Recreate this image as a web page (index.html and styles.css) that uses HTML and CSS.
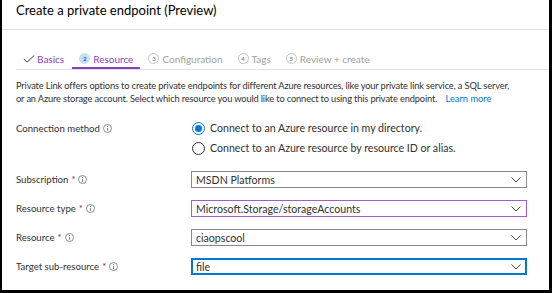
FILE: index.html
```html
<!DOCTYPE html>
<html>
<head>
<meta charset="utf-8">
<link rel="stylesheet" href="styles.css">
</head>
<body>
<div class="frame">
  <header class="title-bar">
    <h1 class="title">Create a private endpoint (Preview)</h1>
  </header>
  <div class="content">
    <nav class="tabs">
      <div class="tab done">
        <svg class="check" width="13" height="9" viewBox="0 0 13 9"><polyline points="0.7,4.4 4.3,8 12.3,0.6" fill="none" stroke="#323130" stroke-width="1.1"/></svg>
        <span>Basics</span>
      </div>
      <div class="tab active">
        <span class="step">2</span>
        <span>Resource</span>
      </div>
      <div class="tab">
        <span class="step">3</span>
        <span>Configuration</span>
      </div>
      <div class="tab">
        <span class="step">4</span>
        <span>Tags</span>
      </div>
      <div class="tab">
        <span class="step">5</span>
        <span>Review + create</span>
      </div>
    </nav>
    <p class="desc">Private Link offers options to create private endpoints for different Azure resources, like your private link service, a SQL server, or an Azure storage account. Select which resource you would like to connect to using this private endpoint. <a class="link">Learn more</a></p>

    <div class="form">
      <div class="row radio-row">
        <div class="label">Connection method <svg class="info" width="9" height="9" viewBox="0 0 9 9"><circle cx="4.5" cy="4.5" r="4" fill="none" stroke="#605e5c" stroke-width="0.7"/><line x1="4.5" y1="3.8" x2="4.5" y2="6.8" stroke="#605e5c" stroke-width="0.8"/><circle cx="4.5" cy="2.5" r="0.5" fill="#605e5c"/></svg></div>
        <div class="radios">
          <div class="radio-opt"><span class="radio checked"></span><span>Connect to an Azure resource in my directory.</span></div>
          <div class="radio-opt"><span class="radio"></span><span>Connect to an Azure resource by resource ID or alias.</span></div>
        </div>
      </div>
      <div class="row">
        <div class="label">Subscription <span class="req">*</span> <svg class="info" width="9" height="9" viewBox="0 0 9 9"><circle cx="4.5" cy="4.5" r="4" fill="none" stroke="#605e5c" stroke-width="0.7"/><line x1="4.5" y1="3.8" x2="4.5" y2="6.8" stroke="#605e5c" stroke-width="0.8"/><circle cx="4.5" cy="2.5" r="0.5" fill="#605e5c"/></svg></div>
        <div class="select"><span>MSDN Platforms</span><svg class="chev" width="10" height="6" viewBox="0 0 10 6"><polyline points="0.5,0.5 5,5 9.5,0.5" fill="none" stroke="#323130" stroke-width="0.9"/></svg></div>
      </div>
      <div class="row">
        <div class="label">Resource type <span class="req">*</span> <svg class="info" width="9" height="9" viewBox="0 0 9 9"><circle cx="4.5" cy="4.5" r="4" fill="none" stroke="#605e5c" stroke-width="0.7"/><line x1="4.5" y1="3.8" x2="4.5" y2="6.8" stroke="#605e5c" stroke-width="0.8"/><circle cx="4.5" cy="2.5" r="0.5" fill="#605e5c"/></svg></div>
        <div class="select purple"><span>Microsoft.Storage/storageAccounts</span><svg class="chev" width="10" height="6" viewBox="0 0 10 6"><polyline points="0.5,0.5 5,5 9.5,0.5" fill="none" stroke="#323130" stroke-width="0.9"/></svg></div>
      </div>
      <div class="row">
        <div class="label">Resource <span class="req">*</span> <svg class="info" width="9" height="9" viewBox="0 0 9 9"><circle cx="4.5" cy="4.5" r="4" fill="none" stroke="#605e5c" stroke-width="0.7"/><line x1="4.5" y1="3.8" x2="4.5" y2="6.8" stroke="#605e5c" stroke-width="0.8"/><circle cx="4.5" cy="2.5" r="0.5" fill="#605e5c"/></svg></div>
        <div class="select"><span>ciaopscool</span><svg class="chev" width="10" height="6" viewBox="0 0 10 6"><polyline points="0.5,0.5 5,5 9.5,0.5" fill="none" stroke="#323130" stroke-width="0.9"/></svg></div>
      </div>
      <div class="row">
        <div class="label">Target sub-resource <span class="req">*</span> <svg class="info" width="9" height="9" viewBox="0 0 9 9"><circle cx="4.5" cy="4.5" r="4" fill="none" stroke="#605e5c" stroke-width="0.7"/><line x1="4.5" y1="3.8" x2="4.5" y2="6.8" stroke="#605e5c" stroke-width="0.8"/><circle cx="4.5" cy="2.5" r="0.5" fill="#605e5c"/></svg></div>
        <div class="select blue"><span>file</span><svg class="chev" width="10" height="6" viewBox="0 0 10 6"><polyline points="0.5,0.5 5,5 9.5,0.5" fill="none" stroke="#323130" stroke-width="0.9"/></svg></div>
      </div>
    </div>
  </div>
</div>
</body>
</html>
```

FILE: styles.css
```css
html, body {
  margin: 0;
  padding: 0;
  background: #fff;
}
body {
  font-family: "Lato", "Open Sans", sans-serif;
  color: #323130;
}
.frame {
  width: 552px;
  height: 293px;
  box-sizing: border-box;
  border-left: 2px solid #000;
  border-right: 3px solid #000;
  border-bottom: 3px solid #000;
  background: #fff;
  overflow: hidden;
}
.title-bar {
  height: 30px;
  box-sizing: border-box;
  border-bottom: 1px solid #e1dfdd;
  padding-left: 14px;
  padding-top: 2px;
}
.title {
  margin: 0;
  font-size: 13px;
  font-weight: 400;
  line-height: 16px;
  color: #000;
}
.content {
  padding-left: 14px;
}
.tabs {
  display: flex;
  margin-top: 20px;
  border-bottom: 1px solid #e1dfdd;
  height: 19px;
  gap: 1px;
}
.tab {
  display: flex;
  align-items: center;
  gap: 3px;
  padding: 0 7px;
  font-size: 10px;
  color: #a19f9d;
  height: 19px;
  box-sizing: border-box;
  padding-bottom: 2px;
}
.tab.done {
  color: #8a3fb5;
  gap: 2px;
}
.tab.active {
  color: #8a3fb5;
  border-bottom: 2px solid #8a3fb5;
  padding-bottom: 0;
}
.check {
  display: block;
  width: 12px;
  height: 8px;
}
.step {
  width: 11px;
  height: 11px;
  border-radius: 50%;
  border: 1px solid #c8c6c4;
  box-sizing: border-box;
  font-size: 6px;
  line-height: 9px;
  text-align: center;
  color: #8a8886;
  font-weight: 700;
}
.tab.active .step {
  background: #c7e0f4;
  border-color: #c7e0f4;
  color: #106ebe;
}
.desc {
  margin: 9px 0 0;
  font-size: 9.3px;
  letter-spacing: -0.15px;
  line-height: 13px;
  width: 500px;
  color: #323130;
}
.link {
  display: inline-block;
  color: #0078d4;
  margin-left: 6px;
  letter-spacing: 0;
}
.form {
  margin-top: 13px;
  display: flex;
  flex-direction: column;
  gap: 12px;
}
.row {
  display: grid;
  grid-template-columns: 175px 336px;
  align-items: center;
}
.radio-row {
  align-items: start;
  margin-bottom: 1px;
}
.label {
  font-size: 9.6px;
  display: flex;
  align-items: center;
  gap: 3px;
  color: #323130;
}
.radio-row .label {
  height: 20px;
}
.req {
  color: #a4262c;
}
.info {
  display: block;
}
.radios {
  display: flex;
  flex-direction: column;
}
.radio-opt {
  display: flex;
  align-items: center;
  height: 20px;
  gap: 5px;
  font-size: 10.6px;
}
.radio {
  width: 13px;
  height: 13px;
  border-radius: 50%;
  border: 1px solid #323130;
  box-sizing: border-box;
  position: relative;
  margin-left: 1px;
}
.radio.checked {
  border-color: #0078d4;
}
.radio.checked::after {
  content: "";
  position: absolute;
  left: 2px;
  top: 2px;
  width: 7px;
  height: 7px;
  border-radius: 50%;
  background: #0078d4;
}
.select {
  height: 17px;
  box-sizing: border-box;
  border: 1px solid #8a8886;
  display: flex;
  align-items: center;
  justify-content: space-between;
  padding: 0 5px 0 4px;
  font-size: 10.6px;
  color: #323130;
}
.select.purple {
  border-color: #a05cc8;
}
.select.blue {
  border: 2px solid #0078d4;
  padding-left: 3px;
  padding-right: 4px;
}
.chev {
  display: block;
}
```
